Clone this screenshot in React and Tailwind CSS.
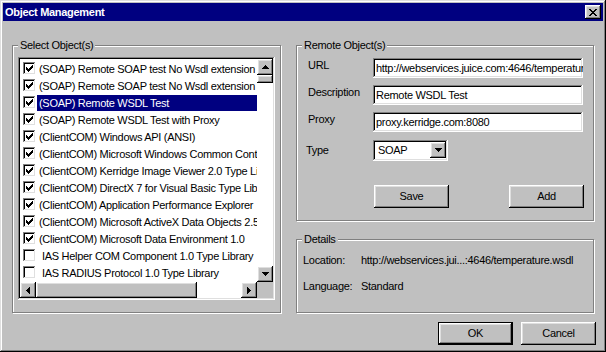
import React from 'react'

// classic 3D edges
const RAISED = 'shadow-[inset_-1px_-1px_#000,inset_1px_1px_#fff,inset_-2px_-2px_#808080,inset_2px_2px_#dfdfdf]'
const SUNKEN = 'shadow-[inset_-1px_-1px_#fff,inset_1px_1px_#808080,inset_-2px_-2px_#dfdfdf,inset_2px_2px_#000]'
const GROUP = 'border border-[#808080] shadow-[inset_1px_1px_#fff,1px_1px_#fff]'

const CHECK = ['......X', '.....XX', 'X...XXX', 'XX.XXX.', 'XXXXX..', '.XXX...', '..X....']
const UP = ['...X...', '..XXX..', '.XXXXX.', 'XXXXXXX']
const DOWN = ['XXXXXXX', '.XXXXX.', '..XXX..', '...X...']
const LEFT = ['...X', '..XX', '.XXX', 'XXXX', '.XXX', '..XX', '...X']
const RIGHT = ['X...', 'XX..', 'XXX.', 'XXXX', 'XXX.', 'XX..', 'X...']
const CLOSE = ['XX....XX', '.XX..XX.', '..XXXX..', '...XX...', '..XXXX..', '.XX..XX.', 'XX....XX']

const items = [
  { label: '(SOAP) Remote SOAP test No Wsdl extension', checked: true },
  { label: '(SOAP) Remote SOAP test No Wsdl extension', checked: true },
  { label: '(SOAP) Remote WSDL Test', checked: true, selected: true },
  { label: '(SOAP) Remote WSDL Test with Proxy', checked: true },
  { label: '(ClientCOM) Windows API (ANSI)', checked: true },
  { label: '(ClientCOM) Microsoft Windows Common Controls 6.0', checked: true },
  { label: '(ClientCOM) Kerridge Image Viewer 2.0 Type Library', checked: true },
  { label: '(ClientCOM) DirectX 7 for Visual Basic Type Library', checked: true },
  { label: '(ClientCOM) Application Performance Explorer', checked: true },
  { label: '(ClientCOM) Microsoft ActiveX Data Objects 2.5 Library', checked: true },
  { label: '(ClientCOM) Microsoft Data Environment 1.0', checked: true },
  { label: 'IAS Helper COM Component 1.0 Type Library', checked: false },
  { label: 'IAS RADIUS Protocol 1.0 Type Library', checked: false },
]

function Pixels({ rows, className = '' }) {
  const w = rows[0].length
  const h = rows.length
  return (
    <svg width={w} height={h} viewBox={`0 0 ${w} ${h}`} shapeRendering="crispEdges" className={`block fill-current ${className}`}>
      {rows.flatMap((r, y) =>
        [...r].map((c, x) => (c === 'X' ? <rect key={`${x}-${y}`} x={x} y={y} width="1" height="1" /> : null))
      )}
    </svg>
  )
}

function ScrollBtn({ rows }) {
  return (
    <div className={`w-[16px] h-[16px] shrink-0 bg-[#c0c0c0] flex items-center justify-center ${RAISED}`}>
      <Pixels rows={rows} />
    </div>
  )
}

function Checkbox({ checked }) {
  return (
    <div className={`ml-[3px] w-[13px] h-[13px] shrink-0 bg-white flex items-center justify-center ${SUNKEN}`}>
      {checked && <Pixels rows={CHECK} />}
    </div>
  )
}

function ListBox() {
  return (
    <div className={`mt-[5px] ml-[5px] w-[257px] h-[243px] bg-white p-[2px] flex flex-col ${SUNKEN}`}>
      <div className="flex flex-1 min-h-0">
        <div className="flex-1 min-w-0 overflow-hidden pt-[1px]">
          {items.map((it, i) => (
            <div key={i} className="flex items-center h-[17px]">
              <Checkbox checked={it.checked} />
              <div
                className={`ml-[1px] flex-1 min-w-0 h-[16px] leading-[16px] whitespace-nowrap overflow-hidden ${
                  it.checked ? 'pl-[2px]' : 'pl-[5px]'
                } ${it.selected ? 'bg-[#000080] text-white' : ''}`}
              >
                {it.label}
              </div>
            </div>
          ))}
        </div>
        <div className="w-[16px] flex flex-col bg-white">
          <ScrollBtn rows={UP} />
          <div className={`h-[8px] shrink-0 bg-[#c0c0c0] ${RAISED}`} />
          <div className="flex-1" />
          <ScrollBtn rows={DOWN} />
        </div>
      </div>
      <div className="flex h-[16px] shrink-0 bg-white">
        <ScrollBtn rows={LEFT} />
        <div className={`w-[161px] bg-[#c0c0c0] ${RAISED}`} />
        <div className="flex-1" />
        <ScrollBtn rows={RIGHT} />
        <div className="w-[16px] bg-[#c0c0c0]" />
      </div>
    </div>
  )
}

function Field({ label, value }) {
  return (
    <div className="flex items-start">
      <span className="w-[65px] leading-[14px]">{label}</span>
      <div className={`w-[210px] h-[20px] bg-white pl-[3px] pr-[2px] leading-[20px] whitespace-nowrap overflow-hidden ${SUNKEN}`}>
        {value}
      </div>
    </div>
  )
}

function Button({ children, isDefault, className = '' }) {
  if (isDefault) {
    return (
      <div className={`w-[75px] h-[23px] border border-black bg-[#c0c0c0] ${className}`}>
        <div className={`h-full flex items-center justify-center ${RAISED}`}>{children}</div>
      </div>
    )
  }
  return (
    <div className={`w-[75px] h-[23px] bg-[#c0c0c0] flex items-center justify-center ${RAISED} ${className}`}>
      {children}
    </div>
  )
}

export default function App() {
  return (
    <div className="w-[606px] h-[352px] bg-[#c0c0c0] p-[3px] flex flex-col font-['Liberation_Sans',Arial,sans-serif] text-[11px] tracking-[-0.3px] text-black shadow-[inset_-1px_-1px_#000,inset_1px_1px_#dfdfdf,inset_-2px_-2px_#808080,inset_2px_2px_#fff]">
      <div className="h-[18px] shrink-0 bg-[#000080] flex items-start justify-between px-[2px]">
        <span className="text-white font-bold leading-[18px]">Object Management</span>
        <div className={`mt-[2px] w-[16px] h-[14px] bg-[#c0c0c0] flex items-center justify-center ${RAISED}`}>
          <Pixels rows={CLOSE} />
        </div>
      </div>

      <div className="flex pt-[18px] pl-[9px]">
        <fieldset className={`w-[269px] h-[274px] ${GROUP}`}>
          <legend className="ml-[5px] px-[2px] leading-[13px] bg-[#c0c0c0]">Select Object(s)</legend>
          <ListBox />
        </fieldset>

        <div className="ml-[15px] w-[298px] flex flex-col">
          <fieldset className={`h-[182px] ${GROUP}`}>
            <legend className="ml-[5px] px-[2px] leading-[13px] bg-[#c0c0c0]">Remote Object(s)</legend>
            <div className="pl-[11px] pt-[6px] flex flex-col">
              <Field label="URL" value="http://webservices.juice.com:4646/temperature.wsdl" />
              <div className="mt-[7px]">
                <Field label="Description" value="Remote WSDL Test" />
              </div>
              <div className="mt-[7px]">
                <Field label="Proxy" value="proxy.kerridge.com:8080" />
              </div>
              <div className="mt-[8px] flex items-start">
                <span className="-ml-[2px] w-[67px] leading-[20px]">Type</span>
                <div className={`w-[75px] h-[21px] bg-white p-[2px] flex ${SUNKEN}`}>
                  <span className="flex-1 pl-[3px] leading-[17px]">SOAP</span>
                  <ScrollBtn rows={DOWN} />
                </div>
              </div>
              <div className="mt-[24px] flex">
                <Button className="ml-[66px]">Save</Button>
                <Button className="ml-[60px]">Add</Button>
              </div>
            </div>
          </fieldset>

          <fieldset className={`mt-[12px] h-[80px] ${GROUP}`}>
            <legend className="ml-[5px] px-[2px] leading-[13px] bg-[#c0c0c0]">Details</legend>
            <div className="pl-[6px] pt-[8px] flex flex-col gap-[13px] leading-[13px]">
              <div className="flex whitespace-nowrap">
                <span className="w-[58px]">Location:</span>
                <span>http://webservices.jui...:4646/temperature.wsdl</span>
              </div>
              <div className="flex whitespace-nowrap">
                <span className="w-[58px]">Language:</span>
                <span>Standard</span>
              </div>
            </div>
          </fieldset>
        </div>
      </div>

      <div className="mt-[9px] flex justify-end gap-[8px] pr-[7px]">
        <Button isDefault>OK</Button>
        <Button>Cancel</Button>
      </div>
    </div>
  )
}
